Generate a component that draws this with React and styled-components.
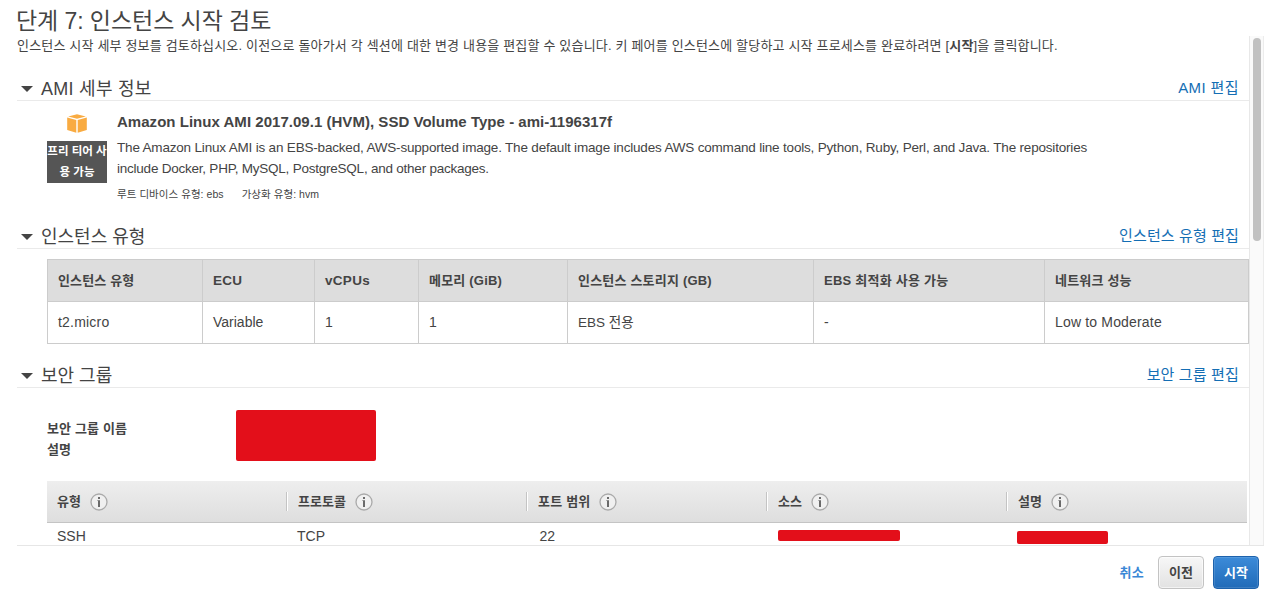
import React from 'react';
import styled, { createGlobalStyle } from 'styled-components';

const Global = createGlobalStyle`
  * { box-sizing: border-box; }
  body {
    margin: 0;
    background: #fff;
    color: #444;
    font-family: "Liberation Sans", "Noto Sans CJK KR", sans-serif;
    font-size: 13px;
    overflow: hidden;
  }
`;

const Page = styled.div`
  width: 1269px;
  height: 598px;
  display: flex;
  flex-direction: column;
  overflow: hidden;
`;
const Title = styled.h1`
  margin: 0;
  padding: 4px 0 0 16px;
  height: 36px;
  font-size: 23px;
  font-weight: 400;
  line-height: 34px;
  letter-spacing: -0.07px;
  white-space: nowrap;
`;
const Frame = styled.div`
  display: flex;
  width: 1247px;
  height: 510px;
  margin-left: 17px;
  border-bottom: 1px solid #e6e6e6;
`;
const Content = styled.main`
  width: 1232px;
  overflow: hidden;
`;
const Track = styled.div`
  width: 15px;
  padding: 2px 0 0 3px;
  background: #fafafa;
  border-left: 1px solid #e8e8e8;
  border-right: 1px solid #ececec;
`;
const Thumb = styled.div`
  width: 8px;
  height: 203px;
  border-radius: 4px;
  background: #c1c1c1;
`;
const Intro = styled.p`
  margin: 0;
  height: 40px;
  line-height: 20px;
  letter-spacing: 0.178px;
  white-space: nowrap;
  b { font-weight: 700; }
`;
const SectionHead = styled.div`
  display: flex;
  align-items: center;
  height: 25px;
  padding: 0 10px 0 4px;
  border-bottom: 1px solid #eaeaea;
`;
const Caret = styled.span`
  width: 0;
  height: 0;
  border: 6px solid transparent;
  border-top: 6px solid #444;
  border-bottom: 0;
  margin: 1px 8px 0 0;
`;
const SectionTitle = styled.h2`
  flex: 1;
  margin: 0;
  padding-top: 2px;
  font-size: 18px;
  font-weight: 400;
  line-height: 22px;
  white-space: nowrap;
  letter-spacing: ${(p) => p.$ls || 0}px;
`;
const EditLink = styled.a`
  font-size: 15px;
  line-height: 24px;
  color: #146eb4;
  white-space: nowrap;
  letter-spacing: ${(p) => p.$ls || 0}px;
`;
const Ami = styled.section`
  display: flex;
  height: 123px;
  padding: 10px 0 0 30px;
`;
const AmiSide = styled.div`
  width: 60px;
  margin-right: 10px;
  display: flex;
  flex-direction: column;
  align-items: center;
`;
const CubeIcon = styled.svg`
  display: block;
  margin: 3px 0 8px;
`;
const Badge = styled.div`
  width: 60px;
  height: 42px;
  background: #555;
  color: #fff;
  font-size: 11.5px;
  font-weight: 700;
  line-height: 21px;
  text-align: center;
  white-space: nowrap;
`;
const AmiBody = styled.div`
  display: flex;
  flex-direction: column;
`;
const AmiName = styled.div`
  height: 26px;
  font-size: 15px;
  font-weight: 700;
  line-height: 22px;
  letter-spacing: 0.03px;
  white-space: nowrap;
`;
const Line = styled.div`
  height: 21px;
  font-size: 13.5px;
  line-height: 21px;
  white-space: nowrap;
  letter-spacing: ${(p) => p.$ls || 0}px;
`;
const Meta = styled.div`
  display: flex;
  gap: 18px;
  padding-top: 6px;
  font-size: 10.5px;
  line-height: 19px;
  letter-spacing: 0.05px;
  white-space: nowrap;
`;
const TypeTable = styled.div`
  display: grid;
  grid-template-columns: 155px 112px 104px 149px 246px 231px 204px;
  grid-template-rows: 42px 42px;
  width: 1202px;
  height: 85px;
  margin: 10px 0 19px 30px;
  border-top: 1px solid #ccc;
  border-left: 1px solid #ccc;
`;
const Cell = styled.div`
  padding-left: 10px;
  line-height: 41px;
  border-right: 1px solid #ccc;
  border-bottom: 1px solid #ccc;
  background: ${(p) => (p.$head ? '#ddd' : '#fff')};
  font-weight: ${(p) => (p.$head ? 700 : 400)};
  font-size: ${(p) => p.$size || 13}px;
  letter-spacing: ${(p) => p.$ls || 0}px;
  white-space: nowrap;
`;
const Group = styled.div`
  display: flex;
  height: 93px;
  padding: 22px 0 0 30px;
`;
const GroupLabels = styled.div`
  width: 189px;
  padding-top: 8px;
  font-weight: 700;
  line-height: 21px;
  letter-spacing: 0.15px;
`;
const Redaction = styled.div`
  width: ${(p) => p.$w}px;
  height: ${(p) => p.$h}px;
  margin-top: ${(p) => p.$mt || 0}px;
  border-radius: 2px;
  background: #e30f1a;
`;
const RuleHead = styled.div`
  display: grid;
  grid-template-columns: 241px 240px 240px 240px 239px;
  align-items: center;
  width: 1200px;
  height: 42px;
  margin-left: 30px;
  border-bottom: 1px solid #c4c4c4;
  background: linear-gradient(#eee, #dedede);
`;
const RuleHeadCell = styled.div`
  display: flex;
  align-items: center;
  gap: 8.5px;
  height: 19px;
  padding-left: 10px;
  font-weight: 700;
  line-height: 19px;
  letter-spacing: ${(p) => p.$ls || 0}px;
  border-right: ${(p) => (p.$last ? 0 : 1)}px solid #fff;
  box-shadow: ${(p) => (p.$last ? 'none' : 'inset -1px 0 #c4c4c4')};
`;
const RuleRow = styled.div`
  display: grid;
  grid-template-columns: repeat(5, 240px);
  width: 1200px;
  margin-left: 30px;
`;
const RuleCell = styled.div`
  padding-left: ${(p) => p.$pl || 10}px;
  font-size: 14px;
  line-height: 26px;
`;
const Footer = styled.footer`
  display: flex;
  align-items: center;
  justify-content: flex-end;
  height: 52px;
  padding: 1px 10px 0 0;
  font-size: 13px;
  font-weight: 700;
`;
const Cancel = styled.a`
  margin-right: 14px;
  padding-bottom: 2px;
  letter-spacing: 0.3px;
  color: #3a87d6;
`;
const Button = styled.button`
  width: 46px;
  height: 33px;
  margin-left: ${(p) => (p.$primary ? 9 : 0)}px;
  padding: 0 0 2px;
  font: inherit;
  border-radius: 4px;
  border: 1px solid ${(p) => (p.$primary ? '#1d62ac' : '#c3c3c3')};
  color: ${(p) => (p.$primary ? '#fff' : '#444')};
  background: ${(p) => (p.$primary ? 'linear-gradient(#3c8bd9, #216bb8)' : 'linear-gradient(#f7f7f7, #e2e2e2)')};
  box-shadow: inset 0 0 0 1px ${(p) => (p.$primary ? 'rgba(255,255,255,.12)' : 'rgba(255,255,255,.6)')};
`;

const Info = () => (
  <svg width="18" height="18" viewBox="0 0 18 18">
    <circle cx="9" cy="9" r="8" fill="#f0f0f0" stroke="#aaa" strokeWidth="1.3" />
    <path d="M8 4h2v2h-2zM7.4 7.2h2.6v6.8h-2v-5.9h-.6z" fill="#6a6a6a" />
  </svg>
);

const Cube = () => (
  <CubeIcon width="20" height="19" viewBox="0 0 20 19">
    <path fill="#f9ab41" d="M10 0.2l8.8 2.2-8.8 2.4-8.8-2.4zM0.2 3.4l9.1 2.5v12.9l-9.1-2.8zM19.8 3.4l-9.1 2.5v12.9l9.1-2.8z" />
  </CubeIcon>
);

const Head = ({ title, link, tls, lls }) => (
  <SectionHead>
    <Caret />
    <SectionTitle $ls={tls}>{title}</SectionTitle>
    <EditLink $ls={lls}>{link}</EditLink>
  </SectionHead>
);

const typeHeads = [
  { text: '인스턴스 유형', ls: 0.15 },
  { text: 'ECU', size: 13.5, ls: 0.3 },
  { text: 'vCPUs', size: 13.5, ls: 0.3 },
  { text: '메모리 (GiB)', ls: 0.2 },
  { text: '인스턴스 스토리지 (GB)', ls: 0.2 },
  { text: 'EBS 최적화 사용 가능', ls: 0.25 },
  { text: '네트워크 성능', ls: 0.2 },
];
const typeValues = [
  { text: 't2.micro', size: 14, ls: 0.2 },
  { text: 'Variable', size: 14 },
  { text: '1', size: 14 },
  { text: '1', size: 14 },
  { text: 'EBS 전용', size: 13.5 },
  { text: '-', size: 14 },
  { text: 'Low to Moderate', size: 14, ls: 0.17 },
];
const ruleHeads = ['유형', '프로토콜', '포트 범위', '소스', '설명'];

export default function App() {
  return (
    <Page>
      <Global />
      <Title>단계 7: 인스턴스 시작 검토</Title>
      <Frame>
        <Content>
          <Intro>
            인스턴스 시작 세부 정보를 검토하십시오. 이전으로 돌아가서 각 섹션에 대한 변경 내용을 편집할 수 있습니다. 키 페어를 인스턴스에 할당하고 시작 프로세스를 완료하려면 [<b>시작</b>]을 클릭합니다.
          </Intro>
          <Head title="AMI 세부 정보" link="AMI 편집" tls={0.27} lls={0.4} />
          <Ami>
            <AmiSide>
              <Cube />
              <Badge>프리 티어 사<br />용 가능</Badge>
            </AmiSide>
            <AmiBody>
              <AmiName>Amazon Linux AMI 2017.09.1 (HVM), SSD Volume Type - ami-1196317f</AmiName>
              <Line $ls={-0.186}>The Amazon Linux AMI is an EBS-backed, AWS-supported image. The default image includes AWS command line tools, Python, Ruby, Perl, and Java. The repositories</Line>
              <Line $ls={-0.23}>include Docker, PHP, MySQL, PostgreSQL, and other packages.</Line>
              <Meta><span>루트 디바이스 유형: ebs</span><span>가상화 유형: hvm</span></Meta>
            </AmiBody>
          </Ami>
          <Head title="인스턴스 유형" link="인스턴스 유형 편집" lls={0.12} />
          <TypeTable>
            {typeHeads.map((c) => <Cell key={c.text} $head $size={c.size} $ls={c.ls}>{c.text}</Cell>)}
            {typeValues.map((c, i) => <Cell key={i} $size={c.size} $ls={c.ls}>{c.text}</Cell>)}
          </TypeTable>
          <Head title="보안 그룹" link="보안 그룹 편집" lls={0.15} />
          <Group>
            <GroupLabels>보안 그룹 이름<br />설명</GroupLabels>
            <Redaction $w={140} $h={51} />
          </Group>
          <RuleHead>
            {ruleHeads.map((t, i) => <RuleHeadCell key={t} $last={i === 4} $ls={i === 2 ? 0.2 : 0.05}>{t}<Info /></RuleHeadCell>)}
          </RuleHead>
          <RuleRow>
            <RuleCell>SSH</RuleCell>
            <RuleCell>TCP</RuleCell>
            <RuleCell $pl={12.5}>22</RuleCell>
            <RuleCell $pl={11}><Redaction $w={122} $h={11} $mt={7} /></RuleCell>
            <RuleCell><Redaction $w={91} $h={13} $mt={8} /></RuleCell>
          </RuleRow>
        </Content>
        <Track><Thumb /></Track>
      </Frame>
      <Footer>
        <Cancel>취소</Cancel>
        <Button>이전</Button>
        <Button $primary>시작</Button>
      </Footer>
    </Page>
  );
}
